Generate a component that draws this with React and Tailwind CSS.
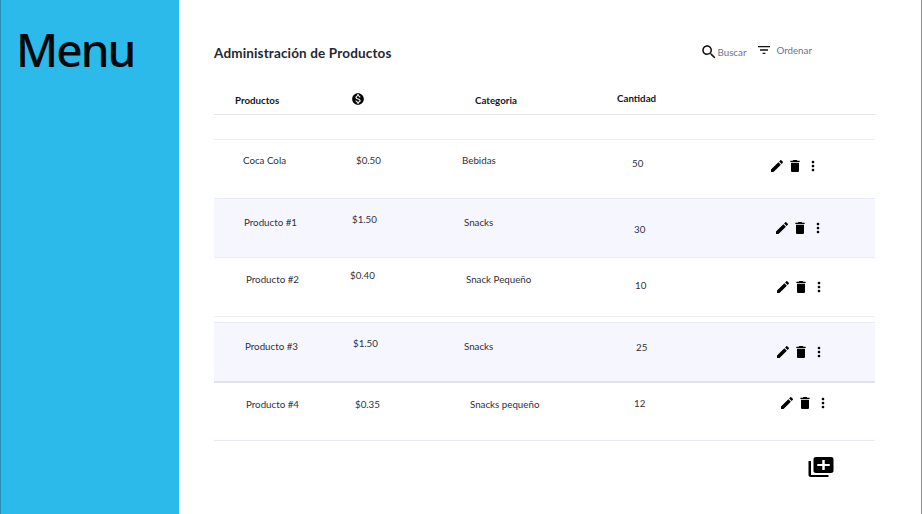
const icons = {
  search: 'M15.5 14h-.79l-.28-.27C15.41 12.59 16 11.11 16 9.5 16 5.91 13.09 3 9.5 3S3 5.91 3 9.5 5.91 16 9.5 16c1.61 0 3.09-.59 4.23-1.57l.27.28v.79l5 4.99L20.49 19l-4.99-5zm-6 0C7.01 14 5 11.99 5 9.5S7.01 5 9.5 5 14 7.01 14 9.5 11.99 14 9.5 14z',
  filter: 'M10 18h4v-2h-4v2zM3 6v2h18V6H3zm3 7h12v-2H6v2z',
  edit: 'M3 17.25V21h3.75L17.81 9.94l-3.75-3.75L3 17.25zM20.71 7.04c.39-.39.39-1.02 0-1.41l-2.34-2.34c-.39-.39-1.02-.39-1.41 0l-1.83 1.83 3.75 3.75 1.83-1.83z',
  trash: 'M6 19c0 1.1.9 2 2 2h8c1.1 0 2-.9 2-2V7H6v12zM19 4h-3.5l-1-1h-5l-1 1H5v2h14V4z',
  more: 'M12 8c1.1 0 2-.9 2-2s-.9-2-2-2-2 .9-2 2 .9 2 2 2zm0 2c-1.1 0-2 .9-2 2s.9 2 2 2 2-.9 2-2-.9-2-2-2zm0 6c-1.1 0-2 .9-2 2s.9 2 2 2 2-.9 2-2-.9-2-2-2z',
  add: 'M4 6H2v14c0 1.1.9 2 2 2h14v-2H4V6zm16-4H8c-1.1 0-2 .9-2 2v12c0 1.1.9 2 2 2h12c1.1 0 2-.9 2-2V4c0-1.1-.9-2-2-2zm-1 9h-4v4h-2v-4H9V9h4V5h2v4h4v2z',
  money: 'M12 2C6.48 2 2 6.48 2 12s4.48 10 10 10 10-4.48 10-10S17.52 2 12 2zm1.41 16.09V20h-2.67v-1.93c-1.71-.36-3.16-1.46-3.27-3.4h1.96c.1 1.05.82 1.87 2.65 1.87 1.96 0 2.4-.98 2.4-1.59 0-.83-.44-1.61-2.67-2.14-2.48-.6-4.18-1.62-4.18-3.67 0-1.72 1.39-2.84 3.11-3.21V4h2.67v1.95c1.86.45 2.79 1.86 2.87 3.39H14.3c-.05-1.11-.64-1.87-2.22-1.87-1.5 0-2.4.68-2.4 1.64 0 .84.65 1.39 2.67 1.91s4.18 1.39 4.18 3.91c-.01 1.83-1.38 2.83-3.12 3.16z',
};

function Icon({ name, className, stretch }) {
  return (
    <svg viewBox="0 0 24 24" fill="currentColor" className={className} preserveAspectRatio={stretch ? 'none' : undefined}>
      <path d={icons[name]} />
    </svg>
  );
}

const rows = [
  {
    rowClass: 'h-[59px] border-t border-[#eeedf5]',
    name: 'Coca Cola', nameClass: 'pl-[29px] pt-[14px]',
    price: '$0.50', priceClass: 'pl-[12px] pt-[14px]',
    cat: 'Bebidas', catClass: 'pl-[8px] pt-[14px]',
    qty: '50', qtyClass: 'pl-[8px] pt-[17px]',
    actClass: 'pl-[6px] pt-[18px]',
  },
  {
    rowClass: 'h-[59px] border-t border-[#e9e8f3] bg-[#f6f7fe]',
    name: 'Producto #1', nameClass: 'pl-[30px] pt-[17px]',
    price: '$1.50', priceClass: 'pl-[8px] pt-[14px]',
    cat: 'Snacks', catClass: 'pl-[10px] pt-[17px]',
    qty: '30', qtyClass: 'pl-[10px] pt-[24px]',
    actClass: 'pl-[11px] pt-[21px]',
  },
  {
    rowClass: 'h-[60px] border-y border-[#eeedf5]',
    name: 'Producto #2', nameClass: 'pl-[32px] pt-[15px]',
    price: '$0.40', priceClass: 'pl-[6px] pt-[11px]',
    cat: 'Snack Pequeño', catClass: 'pl-[12px] pt-[15px]',
    qty: '10', qtyClass: 'pl-[11px] pt-[21px]',
    actClass: 'pl-[12px] pt-[21px]',
  },
  {
    rowClass: 'h-[59px] mt-[5px] border-t border-[#e9e8f3] bg-[#f6f7fe]',
    name: 'Producto #3', nameClass: 'pl-[31px] pt-[17px]',
    price: '$1.50', priceClass: 'pl-[9px] pt-[14px]',
    cat: 'Snacks', catClass: 'pl-[10px] pt-[17px]',
    qty: '25', qtyClass: 'pl-[12px] pt-[18px]',
    actClass: 'pl-[12px] pt-[21px]',
  },
  {
    rowClass: 'h-[59px] border-t-2 border-[#e3e2ee]',
    name: 'Producto #4', nameClass: 'pl-[32px] pt-[15px]',
    price: '$0.35', priceClass: 'pl-[11px] pt-[15px]',
    cat: 'Snacks pequeño', catClass: 'pl-[16px] pt-[15px]',
    qty: '12', qtyClass: 'pl-[10px] pt-[14px]',
    actClass: 'pl-[16px] pt-[12px]',
  },
];

function Row({ row }) {
  return (
    <div className={`flex items-start text-[9.75px] leading-[12px] text-[#2f3040] ${row.rowClass}`}>
      <div className={`w-[130px] ${row.nameClass}`}>{row.name}</div>
      <div className={`w-[110px] ${row.priceClass}`}>{row.price}</div>
      <div className={`w-[170px] ${row.catClass}`}>{row.cat}</div>
      <div className={`w-[139px] ${row.qtyClass}`}>{row.qty}</div>
      <div className={`flex gap-[2px] text-black ${row.actClass}`}>
        <Icon name="edit" className="w-4 h-4" />
        <Icon name="trash" className="w-4 h-4" />
        <Icon name="more" className="w-4 h-4" />
      </div>
    </div>
  );
}

export default function App() {
  return (
    <div className="flex w-[922px] h-[514px] overflow-hidden bg-white font-['Lato',sans-serif] border-r border-[#8f8f8f]">
      {/* Sidebar */}
      <aside className="w-[179px] shrink-0 bg-[#2cbaea] border-l border-[#2b8fb5] pl-[15px] pt-[18px]">
        <h1 className="font-['Noto_Sans',sans-serif] text-[46px] leading-[62px] font-medium tracking-[-2px] text-[#05090c]">Menu</h1>
      </aside>

      {/* Main */}
      <main className="w-[661px] ml-[35px] shrink-0">
        <div className="flex items-start pt-[44px] h-[84px]">
          <h2 className="text-[13.5px] leading-[18px] font-bold text-[#252733] tracking-[0.15px]">Administración de Productos</h2>
          <div className="flex items-center ml-[308px] -mt-[1px] text-[9.75px] text-[#6e7191]">
            <Icon name="search" className="w-[18px] h-[18px] text-[#111]" />
            <span>Buscar</span>
            <Icon name="filter" className="w-4 h-4 ml-[10px] -mt-[4px] text-[#111]" />
            <span className="ml-[4px] -mt-[4px]">Ordenar</span>
          </div>
        </div>

        {/* Header */}
        <div className="flex items-start h-[31px] border-b border-[#e3e2ee] text-[9.75px] leading-[12px] font-bold text-[#14151f]">
          <div className="w-[130px] pl-[21px] pt-[10px]">Productos</div>
          <div className="w-[110px] pl-[7px] pt-[8px]">
            <Icon name="money" className="w-[14px] h-[14px] text-black" />
          </div>
          <div className="w-[170px] pl-[21px] pt-[10px]">Categoria</div>
          <div className="pt-[8px] -ml-[7px]">Cantidad</div>
        </div>

        <div className="h-[24px]" />

        {rows.map((row) => (
          <Row key={row.name} row={row} />
        ))}

        {/* Add button */}
        <div className="flex justify-end border-t border-[#e9e8f3] pt-[14px] pr-[39px]">
          <Icon name="add" stretch className="w-[30px] h-[24px] text-black" />
        </div>
      </main>
    </div>
  );
}
